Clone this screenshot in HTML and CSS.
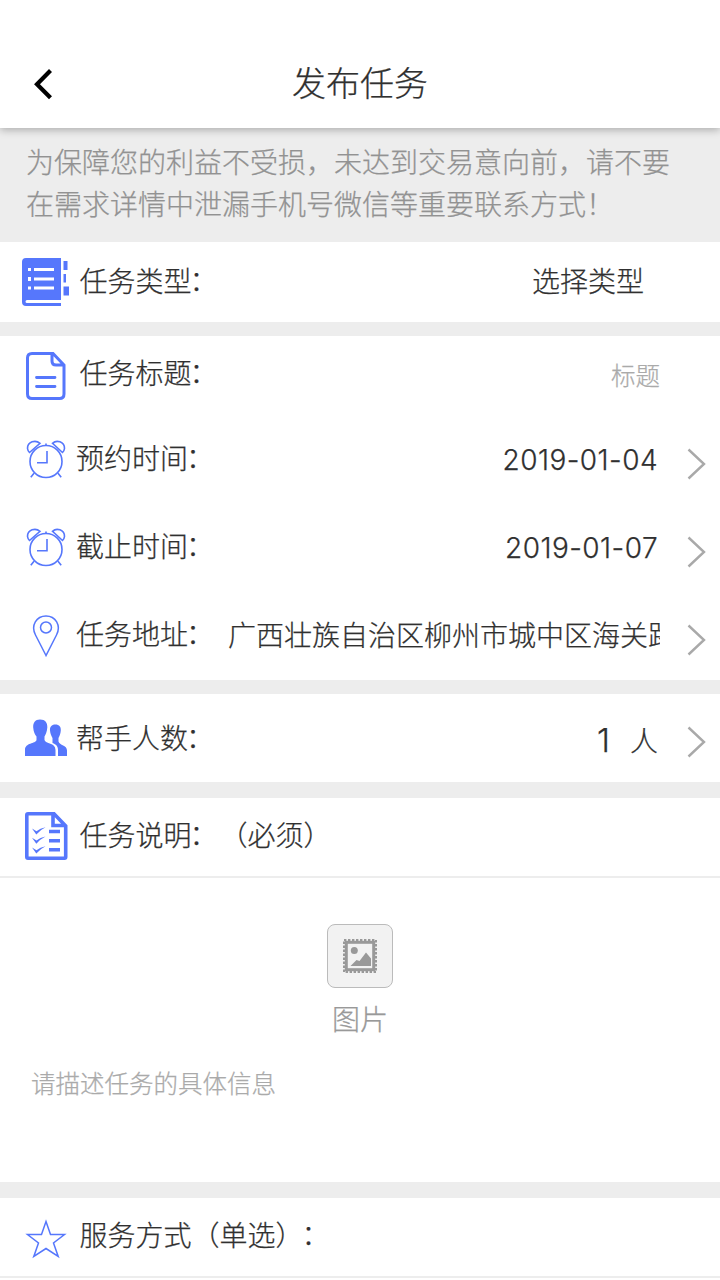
FILE: index.html
```
<!DOCTYPE html>
<html lang="zh-CN">
<head>
  <meta charset="UTF-8" />
  <meta name="viewport" content="width=device-width, initial-scale=1.0" />
  <title>发布任务</title>
  <link rel="stylesheet" href="styles.css">
</head>
<body>
  <header class="topbar">
    <svg class="back" width="20" height="32" viewBox="0 0 20 32" fill="none" stroke="#000" stroke-width="4.2"><path d="M17.500 2.500 4 16.200 17.500 29.800" /></svg>
    <h1>发布任务</h1>
  </header>

  <p class="notice">为保障您的利益不受损，未达到交易意向前，请不要<br>在需求详情中泄漏手机号微信等重要联系方式！</p>

  <section class="group">
    <div class="row row-type">
      <svg class="icon" width="50" height="50" viewBox="0 0 50 50" fill="#5677fc">
        <path d="M5 1H40V43H6a1.500 1.500 0 0 0 0 3H40V49H5Q1 49 1 45V5Q1 1 5 1Z" />
        <path d="M42.500 4h4v9h-4zM42.500 17h2.500v8.500h-2.500zM42.500 29.500h5.500v9h-5.500z" />
        <path fill="#fff" d="M7 11h3v3H7zM13 11h20v3H13zM7 20h3v4H7zM13 20.500h20v3H13zM7 29.500h3v3H7zM13 29.500h20v3H13z" />
      </svg>
      <span class="label">任务类型<i>：</i></span>
      <span class="value">选择类型</span>
    </div>
  </section>

  <section class="group">
    <div class="row row-title">
      <svg class="icon" width="50" height="50" viewBox="0 0 50 50" fill="none" stroke="#5677fc" stroke-width="3">
        <path d="M32 2.500H11Q6.500 2.500 6.500 7V43Q6.500 47.500 11 47.500H38.500Q43 47.500 43 43V14L32 2.500H31V10Q31 14 35 14H43" />
        <path d="M15.500 26.500H34M15.500 35.500H34" stroke-linecap="round" stroke-width="2.800" />
      </svg>
      <span class="label">任务标题<i>：</i></span>
      <span class="value hint">标题</span>
    </div>

    <div class="row">
      <svg class="icon" width="50" height="50" viewBox="0 0 50 50" fill="none" stroke="#5677fc" stroke-width="1.600">
        <circle cx="25" cy="26.500" r="16" />
        <path d="M26 16V27.800H16M13 38.200 9.800 42.300M37 38.200 40.200 42.300M25 8.500V10.500M8.500 17.500 19 8.300C14.500 4.500 6.500 6.500 6.500 13.500Q6.800 16 8.500 17.500ZM41.500 17.500 31.500 8.300C35.500 4.500 43.500 6.500 43.500 13.500Q43.200 16 41.500 17.500Z" />
      </svg>
      <span class="label">预约时间<i>：</i></span>
      <span class="value date">2019-01-04</span>
      <svg class="arrow" width="20" height="32" viewBox="0 0 20 32"><path d="M1.500 1.500 17 16 1.500 30.500" /></svg>
    </div>

    <div class="row">
      <svg class="icon" width="50" height="50" viewBox="0 0 50 50" fill="none" stroke="#5677fc" stroke-width="1.600">
        <circle cx="25" cy="26.500" r="16" />
        <path d="M26 16V27.800H16M13 38.200 9.800 42.300M37 38.200 40.200 42.300M25 8.500V10.500M8.500 17.500 19 8.300C14.500 4.500 6.500 6.500 6.500 13.500Q6.800 16 8.500 17.500ZM41.500 17.500 31.500 8.300C35.500 4.500 43.500 6.500 43.500 13.500Q43.200 16 41.500 17.500Z" />
      </svg>
      <span class="label">截止时间<i>：</i></span>
      <span class="value date">2019-01-07</span>
      <svg class="arrow" width="20" height="32" viewBox="0 0 20 32"><path d="M1.500 1.500 17 16 1.500 30.500" /></svg>
    </div>

    <div class="row">
      <svg class="icon" width="50" height="50" viewBox="0 0 50 50" fill="none" stroke="#5677fc" stroke-width="1.500">
        <path d="M25 44.500 14.500 24C9.500 14.500 15.500 5 25 5S40.500 14.500 35.500 24Z" />
        <circle cx="25" cy="16.500" r="5.500" />
      </svg>
      <span class="label">任务地址<i>：</i></span>
      <span class="value address">广西壮族自治区柳州市城中区海关路</span>
      <svg class="arrow" width="20" height="32" viewBox="0 0 20 32"><path d="M1.500 1.500 17 16 1.500 30.500" /></svg>
    </div>
  </section>

  <section class="group group-people">
    <div class="row">
      <svg class="icon" width="50" height="50" viewBox="0 0 50 50" fill="#5677fc">
        <path d="M19 6.500C24.500 6.500 26.500 10 26.300 14.500C26 19 24.500 21.500 23.500 23.500V27C24.500 31 34.500 29.500 34.500 37V43H4V37C4 29.500 14.500 31 15.500 27V23.500C14 21.500 12.500 19 12.200 14.500C12 10 14 6.500 19 6.500Z" />
        <path d="M34.300 11.500C38.500 11.500 40 14 39.800 17.500C39.600 21 38.500 23 37.500 25V28.500C38.500 32.500 46 32 46 37.500V43H37V37C37 33 35 31.500 31.500 30V25C30.500 23 29.200 21 29 17.500C28.800 14 30.500 11.500 34.300 11.500Z" />
      </svg>
      <span class="label">帮手人数<i>：</i></span>
      <span class="value count"><b>1</b>人</span>
      <svg class="arrow" width="20" height="32" viewBox="0 0 20 32"><path d="M1.500 1.500 17 16 1.500 30.500" /></svg>
    </div>
  </section>

  <section class="group group-detail">
    <div class="row row-head">
      <svg class="icon" width="50" height="50" viewBox="0 0 50 50" fill="none" stroke="#5677fc" stroke-width="3.600">
        <path d="M32 2.800H7Q5.800 2.800 5.800 4V46Q5.800 47.200 7 47.200H43.500Q44.700 47.200 44.700 46V15L33 2.800H32V14.500H44.500" />
        <path d="M28 20.500H39M28 29.700H39M28 38.800H39" stroke-width="3.400" />
        <path fill="#5677fc" stroke="none" d="M11 17.500 15.500 20.300Q19 17 24.500 16.200Q19 19 15.300 23.500ZM11 26.700 15.500 29.500Q19 26.200 24.500 25.400Q19 28.200 15.300 32.700ZM11 36.500 15.500 39.300Q19 36 24.500 35.200Q19 38 15.300 42.500Z" />
      </svg>
      <span class="label">任务说明<i>：</i>（必须）</span>
    </div>
    <div class="detail">
      <div class="upload">
        <div class="upload-box">
          <svg width="36" height="36" viewBox="0 0 36 36">
            <rect x="2" y="2" width="32" height="32" fill="none" stroke="#999" stroke-width="2" stroke-dasharray="2.400 1.600" />
            <rect x="4.300" y="4.300" width="27.400" height="27.400" fill="none" stroke="#999" stroke-width="3" />
            <circle cx="12.300" cy="12.500" r="3.500" fill="#999" />
            <path fill="#999" d="M8.500 28 14.500 22 17.500 23 24 14.500 29 20.500V28Z" />
          </svg>
        </div>
        <span>图片</span>
      </div>
      <p class="hint">请描述任务的具体信息</p>
    </div>
  </section>

  <section class="group group-service">
    <div class="row row-head">
      <svg class="icon" width="50" height="50" viewBox="0 0 50 50" fill="none" stroke="#5677fc" stroke-width="1.500">
        <path d="M25 8.500 29.500 21.500 43.500 21.500 32.500 30 37.200 43.500 25 35.500 12.800 43.500 17.500 30 6.500 21.500 20.500 21.500Z" />
      </svg>
      <span class="label">服务方式（单选）<i>：</i></span>
    </div>
  </section>
</body>
</html>
```
FILE: styles.css
```
* {
  box-sizing: border-box;
  margin: 0;
  padding: 0;
}

body {
  width: 720px;
  height: 1280px;
  overflow: hidden;
  font-family: "Noto Sans CJK SC", sans-serif;
  font-weight: 300;
  font-size: 28px;
  line-height: 42px;
  text-spacing-trim: space-all;
  -webkit-text-stroke: 0.25px;
  color: #303030;
  background: #ededed;
}

svg {
  display: block;
  flex: none;
}

.topbar {
  display: grid;
  grid-template-columns: 60px 1fr 60px;
  align-items: center;
  height: 128px;
  padding-top: 35px;
  background: #fff;
  box-shadow: 0 2px 8px rgba(0, 0, 0, 0.28);
}

.back {
  margin: 5px 0 0 33px;
}

h1 {
  font-size: 34px;
  font-weight: 300;
  text-align: center;
}

.notice {
  height: 114px;
  padding: 12px 26px 0;
  color: #929292;
  white-space: nowrap;
}

.group {
  background: #fff;
  margin-bottom: 14px;
}

.group-people {
  margin-bottom: 16px;
}

.row {
  display: flex;
  align-items: center;
  height: 88px;
  padding: 0 13px 0 21px;
}

.icon {
  margin-right: 5px;
}

.label {
  white-space: nowrap;
  padding-bottom: 6px;
}

.label i {
  display: inline-block;
  width: 28px;
  font-style: normal;
  transform: translate(-2px, -1px);
}

.value {
  margin-left: auto;
  white-space: nowrap;
}

.arrow {
  margin: 8px 0 0 27px;
  fill: none;
  stroke: #a9a9a9;
  stroke-width: 2.400;
}

.row-type,
.row-title {
  height: 80px;
}

.row-type .icon,
.row-title .icon,
.row-head .icon {
  margin-right: 8.500px;
}

.row-type .label {
  padding-bottom: 4px;
}

.row-type .value {
  padding: 0 63px 4px 0;
}

.row-title .label {
  padding-bottom: 8px;
}

.row-title .value {
  padding: 0 47px 2px 0;
}

.hint {
  font-size: 24.500px;
  color: #aaa;
}

.date {
  padding-right: 2px;
  font-family: Inter, "Noto Sans CJK SC", sans-serif;
  letter-spacing: 0.450px;
}

.address {
  width: 432px;
  margin-left: 12px;
  padding-bottom: 4px;
  overflow: hidden;
}

.count {
  display: flex;
  align-items: center;
  gap: 20px;
  padding: 4px 2px 0 0;
}

.count b {
  font: 300 33px Inter, sans-serif;
}

.group-people .label {
  padding-bottom: 2px;
}

.row-head {
  height: 80px;
  border-bottom: 2px solid #ededed;
}

.row-head .label {
  padding-bottom: 6px;
}

.row-head .icon {
  margin-top: -2px;
}

.group-detail {
  margin-bottom: 16px;
}

.detail {
  height: 304px;
  padding-top: 46px;
}

.upload {
  display: flex;
  flex-direction: column;
  align-items: center;
  gap: 9px;
  color: #999;
}

.upload-box {
  display: flex;
  align-items: center;
  justify-content: center;
  width: 66px;
  height: 64px;
  border: 1px solid #bbb;
  border-radius: 8px;
  background: #f2f2f2;
}

.detail .hint {
  margin: 23px 0 0 31px;
}

.group-service {
  height: 82px;
}

.group-service .icon {
  margin-top: 2px;
}
```
